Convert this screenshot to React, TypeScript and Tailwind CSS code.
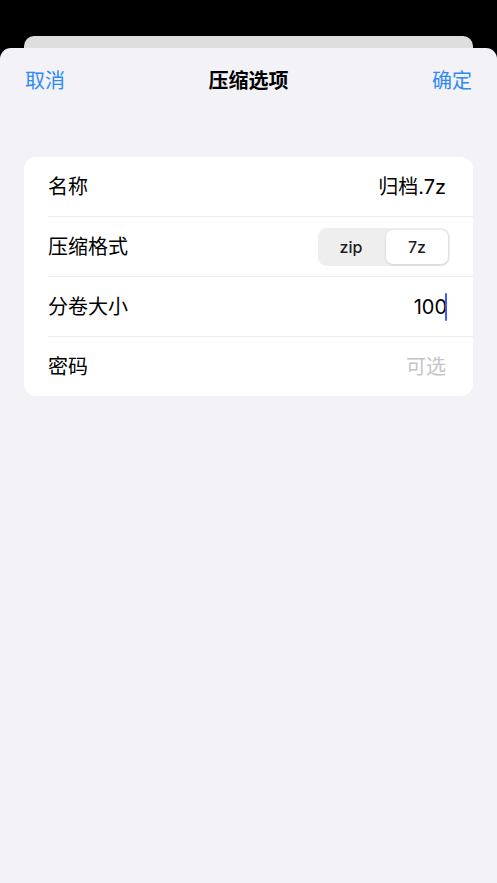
import React from "react";

const font = { fontFamily: '"Inter", "Noto Sans CJK SC", sans-serif' };

export default function App() {
  return (
    <div
      className="w-[497px] h-[883px] bg-black flex flex-col pt-[36px] overflow-hidden"
      style={font}
    >
      <div className="mx-[24px] h-[14px] -mb-[2px] bg-[#dedede] rounded-t-[10px]" />
      <div className="flex-1 bg-[#f2f2f7] rounded-t-[11px] flex flex-col">
        <div className="h-[66px] flex items-center justify-between px-[25px] text-[20px]">
          <span className="text-[#2f8af5]">取消</span>
          <span className="font-semibold text-black">压缩选项</span>
          <span className="text-[#2f8af5]">确定</span>
        </div>
        <div className="mt-[43px] mx-[24px] bg-white rounded-[12px] text-[20px] text-black">
          <div className="pl-[24px]">
            <div className="h-[60px] flex items-center border-b border-[#ececef] pr-[27px]">
              <span>名称</span>
              <span className="ml-auto">归档.7z</span>
            </div>
          </div>
          <div className="pl-[24px]">
            <div className="h-[60px] flex items-center border-b border-[#ececef] pr-[23px]">
              <span>压缩格式</span>
              <div className="ml-auto w-[132px] h-[38px] bg-[#eeeeef] rounded-[9px] p-[2px] flex text-[16px] font-medium">
                <div className="w-[66px] flex items-center justify-center pr-[4px] text-[#1c1c1e]">zip</div>
                <div className="flex-1 flex items-center justify-center bg-white rounded-[7px] shadow-[0_1px_3px_rgba(0,0,0,0.12)] text-[#1c1c1e]">
                  7z
                </div>
              </div>
            </div>
          </div>
          <div className="pl-[24px]">
            <div className="h-[60px] flex items-center border-b border-[#ececef] pr-[26px]">
              <span>分卷大小</span>
              <span className="ml-auto flex items-center">
                <span>100</span>
                <span className="inline-block w-[2px] h-[28px] bg-[#3d5cf5] -ml-[2px] rounded-[1px]" />
              </span>
            </div>
          </div>
          <div className="pl-[24px]">
            <div className="h-[59px] flex items-center pr-[27px]">
              <span>密码</span>
              <span className="ml-auto text-[#c4c4c7]">可选</span>
            </div>
          </div>
        </div>
      </div>
    </div>
  );
}
